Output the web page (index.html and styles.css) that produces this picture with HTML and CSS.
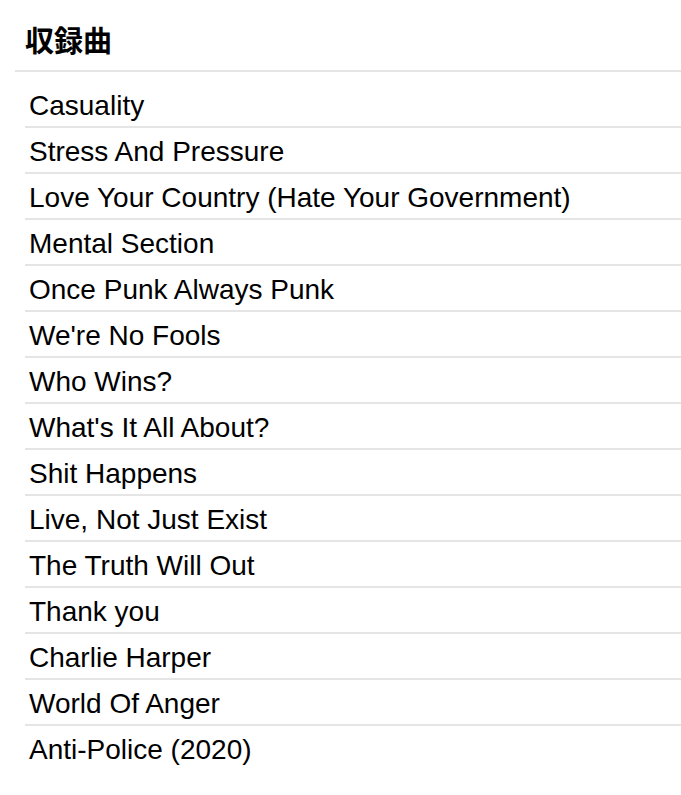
FILE: index.html
```html
<!DOCTYPE html>
<html lang="ja">
<head>
<meta charset="utf-8">
<title>収録曲</title>
<link rel="stylesheet" href="styles.css">
</head>
<body>
<section class="tracks">
  <h2 class="tracks-title">収録曲</h2>
  <ul class="track-list">
    <li class="track">Casuality</li>
    <li class="track">Stress And Pressure</li>
    <li class="track">Love Your Country (Hate Your Government)</li>
    <li class="track">Mental Section</li>
    <li class="track">Once Punk Always Punk</li>
    <li class="track">We're No Fools</li>
    <li class="track">Who Wins?</li>
    <li class="track">What's It All About?</li>
    <li class="track">Shit Happens</li>
    <li class="track">Live, Not Just Exist</li>
    <li class="track">The Truth Will Out</li>
    <li class="track">Thank you</li>
    <li class="track">Charlie Harper</li>
    <li class="track">World Of Anger</li>
    <li class="track">Anti-Police (2020)</li>
  </ul>
</section>
</body>
</html>
```

FILE: styles.css
```css
html, body {
  margin: 0;
  padding: 0;
  background: #ffffff;
}

body {
  font-family: "Liberation Sans", "Noto Sans CJK JP", Arial, sans-serif;
  color: #000000;
}

.tracks {
  padding-left: 15px;
}

.tracks-title {
  margin: 0;
  padding: 24px 10px 10px;
  font-size: 29px;
  line-height: 36px;
  font-weight: bold;
  font-family: "Liberation Sans", "Noto Sans CJK JP", sans-serif;
  border-bottom: 2px solid #e5e5e5;
}

.track-list {
  list-style: none;
  margin: 10px 0 0 10px;
  padding: 0;
}

.track {
  font-size: 28px;
  line-height: 40px;
  padding: 4px 0 0 4px;
  border-bottom: 2px solid #e5e5e5;
}

.track:last-child {
  border-bottom: none;
}
```
